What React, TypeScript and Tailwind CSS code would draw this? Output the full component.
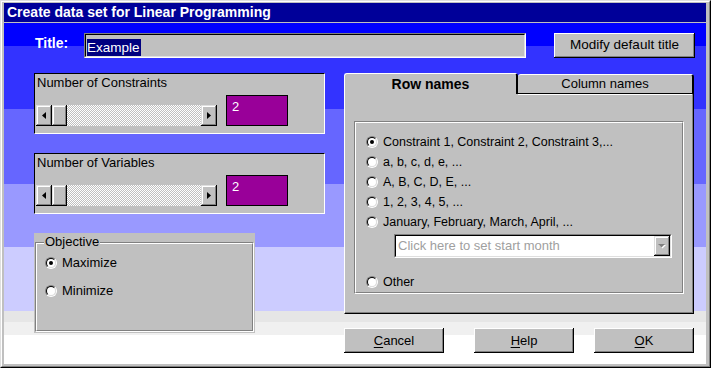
import React from "react";

const bevel =
  "bg-[#c0c0c0] shadow-[inset_-1px_-1px_0_#000,inset_1px_1px_0_#dfdfdf,inset_-2px_-2px_0_#808080,inset_2px_2px_0_#fff]";
const btnBevel =
  "bg-[#c0c0c0] shadow-[inset_-1px_-1px_0_#000,inset_1px_1px_0_#fff,inset_-2px_-2px_0_#808080]";

function Radio({ checked }: { checked?: boolean }) {
  return (
    <div className="w-[12px] h-[12px] shrink-0 rounded-full border border-t-[#808080] border-l-[#808080] border-b-white border-r-white flex">
      <div className="flex-1 rounded-full border border-t-black border-l-black border-b-[#dfdfdf] border-r-[#dfdfdf] bg-white flex items-center justify-center">
        {checked && <div className="w-[4px] h-[4px] rounded-full bg-black" />}
      </div>
    </div>
  );
}

function Scrollbar() {
  return (
    <div className="flex h-[21px] w-[181px]">
      <div className={`w-[16px] h-full flex items-center justify-center ${bevel}`}>
        <svg width="4" height="7" viewBox="0 0 4 7">
          <path d="M4 0V7L0 3.5Z" fill="#000" />
        </svg>
      </div>
      <div className={`w-[15px] h-full ${bevel}`} />
      <div className="flex-1 h-full bg-[image:repeating-conic-gradient(#c0c0c0_0_25%,#ffffff_0_50%)] bg-[length:2px_2px]" />
      <div className={`w-[16px] h-full flex items-center justify-center ${bevel}`}>
        <svg width="4" height="7" viewBox="0 0 4 7">
          <path d="M0 0V7L4 3.5Z" fill="#000" />
        </svg>
      </div>
    </div>
  );
}

function SliderBox({ label }: { label: string }) {
  return (
    <div className="w-[291px] h-[61px] bg-[#c0c0c0] border-t border-l border-t-black border-l-black border-b border-r border-b-white border-r-white flex flex-col">
      <div className="pl-[2px] pt-[1px] text-[13px] leading-[16px] text-black">{label}</div>
      <div className="flex items-end mt-[4px] pl-[1px]">
        <Scrollbar />
        <div className="ml-[9px] w-[62px] h-[31px] bg-[#990099] border border-black text-white text-[13px] leading-[16px] pl-[5px] pt-[3px]">
          2
        </div>
      </div>
    </div>
  );
}

function Etched({ children, className }: { children?: React.ReactNode; className?: string }) {
  return (
    <div className={`border border-t-[#808080] border-l-[#808080] border-b-white border-r-white ${className ?? ""}`}>
      <div className="h-full border border-t-white border-l-white border-b-[#808080] border-r-[#808080]">
        {children}
      </div>
    </div>
  );
}

function WinButton({ u, rest, w }: { u: string; rest: string; w: string }) {
  return (
    <div className={`${w} h-[25px] ${btnBevel} flex items-center justify-center text-[13px] text-black`}>
      <span>
        <span className="underline underline-offset-[2px]">{u}</span>
        {rest}
      </span>
    </div>
  );
}

function PanelRadio({ checked, label }: { checked?: boolean; label: string }) {
  return (
    <div className="h-[20px] flex items-center pl-[10px]">
      <Radio checked={checked} />
      <span className="ml-[5px] text-[12.5px] leading-[16px] text-black">{label}</span>
    </div>
  );
}

export default function App() {
  return (
    <div className="w-[711px] h-[368px] font-['Liberation_Sans',Arial,sans-serif] border border-t-[#dfdfdf] border-l-[#dfdfdf] border-b-black border-r-black bg-[#c0c0c0]">
      <div className="w-full h-full border border-t-white border-l-white border-b-[#808080] border-r-[#808080] pt-[1px] pl-[2px] pr-[3px] pb-[2px] flex flex-col">
        <div className="h-[19px] bg-[#000099] text-white font-bold text-[14px] leading-[19px] pl-[3px]">
          Create data set for Linear Programming
        </div>
        <div className="h-[342px] flex flex-col bg-[linear-gradient(to_bottom,#c0c0c0_0px,#c0c0c0_1px,#0000ff_1px,#0000ff_24px,#3333ff_24px,#3333ff_87px,#6666ff_87px,#6666ff_162px,#9999ff_162px,#9999ff_225px,#ccccff_225px,#ccccff_289px,#e6e6e6_289px,#e6e6e6_300px,#f0f0f0_300px,#f0f0f0_313px,#ffffff_313px,#ffffff_342px)]">
          {/* title row */}
          <div className="flex items-start pt-[11px] pl-[31px]">
            <div className="w-[49px] pt-[2px] text-white font-bold text-[14px] leading-[16px]">Title:</div>
            <div className="w-[442px] h-[25px] border border-t-[#808080] border-l-[#808080] border-b-white border-r-white">
              <div className="h-full border border-t-black border-l-black border-b-[#dfdfdf] border-r-[#dfdfdf] bg-[#c0c0c0] pl-[1px]">
                <span className="inline-block bg-[#000080] text-white text-[13.5px] leading-[17px] pr-[1px]">Example</span>
              </div>
            </div>
            <div className="ml-[28px]">
              <div className={`w-[141px] h-[25px] ${btnBevel} flex items-center justify-center text-[13.5px] text-black`}>
                Modify default title
              </div>
            </div>
          </div>

          {/* main row */}
          <div className="flex mt-[15px]">
            <div className="pl-[30px] flex flex-col">
              <SliderBox label="Number of Constraints" />
              <div className="mt-[19px]">
                <SliderBox label="Number of Variables" />
              </div>
              <div className="mt-[19px] w-[221px] h-[100px] bg-[#c0c0c0] pt-[9px] px-[1px] pb-[1px]">
                <Etched className="h-full relative">
                  <div className="absolute left-[8px] top-[-9px] px-[1px] bg-[#c0c0c0] text-[13px] leading-[16px] text-black">
                    Objective
                  </div>
                  <div className="pt-[9px] pl-[8px] flex flex-col">
                    <div className="h-[20px] flex items-center">
                      <Radio checked />
                      <span className="ml-[5px] text-[13px] text-black">Maximize</span>
                    </div>
                    <div className="h-[20px] mt-[8px] flex items-center">
                      <Radio />
                      <span className="ml-[5px] text-[13px] text-black">Minimize</span>
                    </div>
                  </div>
                </Etched>
              </div>
            </div>

            <div className="ml-[19px] w-[350px] flex flex-col">
              {/* tabs */}
              <div className="flex h-[21px]">
                <div className="w-[174px] h-[21px] bg-[#c0c0c0] rounded-t-[3px] border-t border-l border-t-white border-l-white border-r-2 border-r-black flex items-center justify-center font-bold text-[14px] text-black pt-[1px]">
                  Row names
                </div>
                <div className="flex-1 mt-[1px] h-[20px] bg-[#c0c0c0] rounded-t-[3px] border-t border-t-white border-r-2 border-r-black border-b border-b-black flex items-center justify-center text-[13px] text-black">
                  Column names
                </div>
              </div>
              {/* panel */}
              <div className="h-[220px] bg-[#c0c0c0] border-l border-l-white border-r border-r-black border-b border-b-black shadow-[inset_-1px_-1px_0_#808080] flex flex-col">
                <div className="flex h-[1px]">
                  <div className="w-[173px]" />
                  <div className="flex-1 bg-white mr-[1px]" />
                </div>
                <div className="px-[9px] pt-[26px]">
                  <Etched className="h-[173px]">
                    <div className="pt-[9px] flex flex-col">
                      <PanelRadio checked label="Constraint 1, Constraint 2, Constraint 3,..." />
                      <PanelRadio label="a, b, c, d, e, ..." />
                      <PanelRadio label="A, B, C, D, E, ..." />
                      <PanelRadio label="1, 2, 3, 4, 5, ..." />
                      <PanelRadio label="January, February, March, April, ..." />
                      <div className="ml-[38px] mt-[2px] w-[278px] h-[24px] border border-t-[#808080] border-l-[#808080] border-b-white border-r-white">
                        <div className="h-full border border-t-black border-l-black border-b-[#dfdfdf] border-r-[#dfdfdf] bg-white flex items-center">
                          <span className="flex-1 pl-[2px] text-[13px] text-[#a0a0a0]">Click here to set start month</span>
                          <div className={`w-[16px] h-[20px] ${bevel} flex items-center justify-center`}>
                            <svg width="8" height="5" viewBox="0 0 8 5">
                              <path d="M1 1H8L4.5 4.5Z" fill="#fff" />
                              <path d="M0 0H7L3.5 3.5Z" fill="#808080" />
                            </svg>
                          </div>
                        </div>
                      </div>
                      <div className="mt-[14px]">
                        <PanelRadio label="Other" />
                      </div>
                    </div>
                  </Etched>
                </div>
              </div>
              {/* buttons */}
              <div className="flex mt-[14px]">
                <WinButton w="w-[100px]" u="C" rest="ancel" />
                <div className="ml-[30px]">
                  <WinButton w="w-[100px]" u="H" rest="elp" />
                </div>
                <div className="ml-[20px]">
                  <WinButton w="w-[100px]" u="O" rest="K" />
                </div>
              </div>
            </div>
          </div>
        </div>
      </div>
    </div>
  );
}
